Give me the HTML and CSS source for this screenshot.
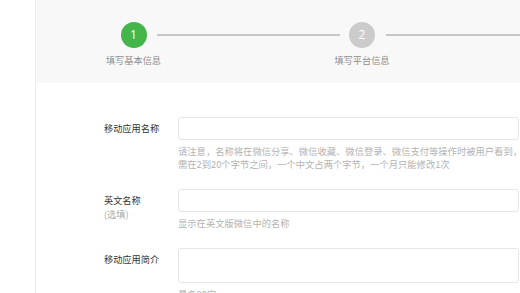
FILE: index.html
```html
<!DOCTYPE html>
<html lang="zh">
<head>
<meta charset="utf-8">
<link rel="stylesheet" href="styles.css">
</head>
<body>
<div class="page">
  <div class="side"></div>
  <div class="main">
    <div class="steps">
      <div class="step">
        <div class="circle active">1</div>
        <div class="step-label">填写基本信息</div>
      </div>
      <div class="line line-mid"></div>
      <div class="step">
        <div class="circle">2</div>
        <div class="step-label">填写平台信息</div>
      </div>
      <div class="line line-end"></div>
    </div>
    <div class="form">
      <div class="row">
        <div class="label">移动应用名称</div>
        <div class="field">
          <div class="input"></div>
          <div class="hint">请注意，名称将在微信分享、微信收藏、微信登录、微信支付等操作时被用户看到，<br>需在2到20个字节之间，一个中文占两个字节，一个月只能修改1次</div>
        </div>
      </div>
      <div class="row">
        <div class="label">英文名称<div class="sub">(选填)</div></div>
        <div class="field">
          <div class="input"></div>
          <div class="hint">显示在英文版微信中的名称</div>
        </div>
      </div>
      <div class="row">
        <div class="label">移动应用简介</div>
        <div class="field">
          <div class="input textarea"></div>
          <div class="hint">最多80字</div>
        </div>
      </div>
    </div>
  </div>
</div>
</body>
</html>
```
FILE: styles.css
```css
html, body {
  margin: 0;
  padding: 0;
  background: #ffffff;
  font-family: "Noto Sans CJK SC", "Noto Sans", sans-serif;
  overflow: hidden;
}
.page {
  display: flex;
  height: 293px;
  overflow: hidden;
}
.side {
  width: 35px;
  flex: none;
  background: #ffffff;
}
.main {
  flex: 1;
  min-width: 0;
  border-left: 1px solid #ececec;
  display: flex;
  flex-direction: column;
}
.steps {
  flex: none;
  height: 83px;
  background: #f8f8f8;
  display: flex;
  align-items: flex-start;
  padding: 22px 0 0 84.5px;
  box-sizing: border-box;
}
.step {
  width: 26px;
  flex: none;
  display: flex;
  flex-direction: column;
  align-items: center;
}
.circle {
  width: 26px;
  height: 26px;
  border-radius: 50%;
  background: #cbcbcb;
  color: #ffffff;
  font-family: "Open Sans", "Noto Sans", sans-serif;
  font-size: 12px;
  line-height: 26px;
  text-align: center;
}
.circle.active {
  background: #44b549;
}
.step-label {
  margin-top: 6px;
  white-space: nowrap;
  font-size: 9.2px;
  line-height: 12px;
  color: #8e8e8e;
}
.line {
  height: 2px;
  background: #c7c7c7;
  margin-top: 12px;
}
.line-mid {
  width: 183px;
  margin-left: 10.5px;
  margin-right: 9px;
  flex: none;
}
.line-end {
  flex: 1;
  margin-left: 11px;
}
.form {
  flex: none;
  padding: 34px 1px 0 68px;
  display: flex;
  flex-direction: column;
  gap: 18px;
}
.row {
  flex: none;
  display: flex;
  align-items: flex-start;
}
.label {
  width: 74px;
  flex: none;
  font-size: 9.2px;
  line-height: 23px;
  color: #353535;
}
.sub {
  color: #a8a8a8;
  line-height: 5px;
}
.field {
  flex: 1;
  min-width: 0;
}
.input {
  height: 23px;
  border: 1px solid #e6e6e6;
  border-radius: 3px;
  box-sizing: border-box;
  background: #ffffff;
}
.textarea {
  height: 35px;
}
.hint {
  margin-top: 5px;
  font-size: 9.3px;
  line-height: 13px;
  color: #b3b3b3;
  white-space: nowrap;
}
```
